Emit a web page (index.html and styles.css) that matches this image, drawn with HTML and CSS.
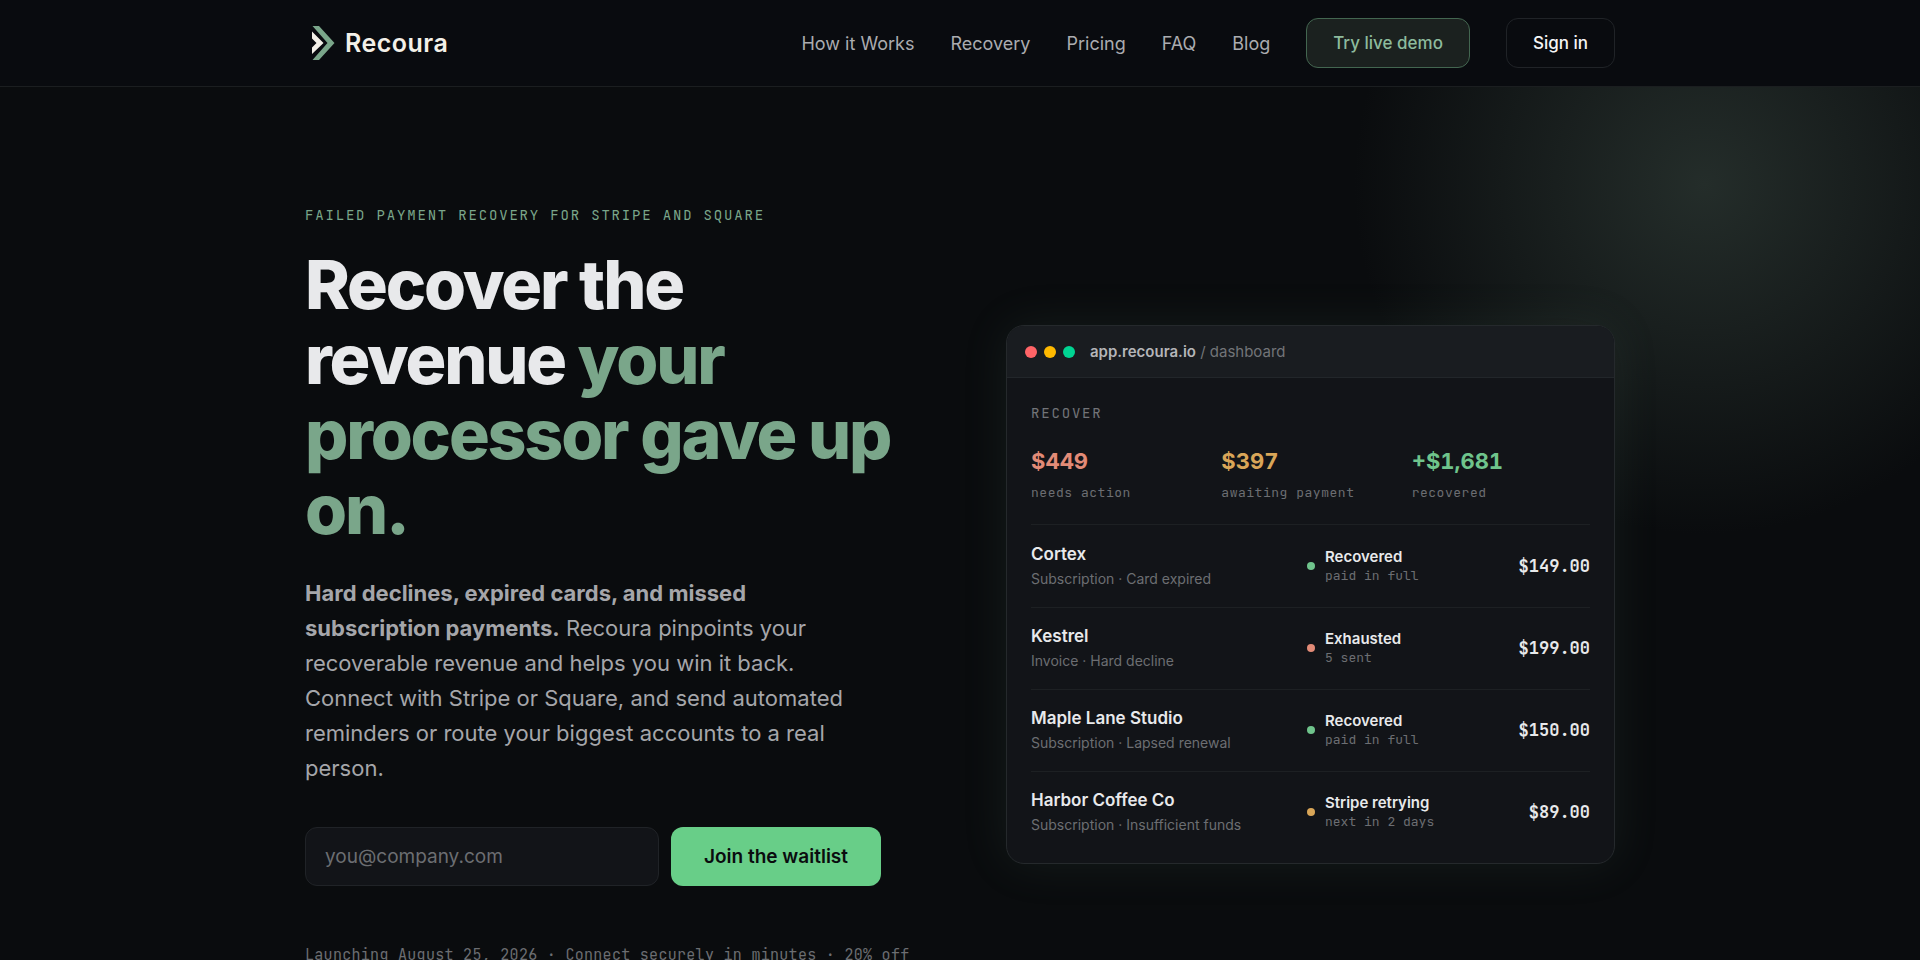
FILE: index.html
```html
<!DOCTYPE html>
<html lang="en">

<head>
  <meta charset="UTF-8">
  <meta name="viewport" content="width=device-width, initial-scale=1.0">
  <title>Recoura</title>
  <link rel="stylesheet" href="styles.css">
</head>

<body>

  <header class="site-header">
    <div class="container header-inner">
      <a class="logo" href="#">
        <svg class="logo-mark" viewBox="0 0 32 34" aria-hidden="true">
          <path fill="#7aa68a" d="M7.500 0h6.500l15.500 17L14 34H7.500l15-17z" />
          <path fill="#f3f0e8" d="M7 5.500L18.500 17 7 28v-6.500l4.500-4.500L7 12.500z" />
        </svg>
        Recoura
      </a>
      <nav class="nav">
        <a class="nav-link" href="#how">How it Works</a>
        <a class="nav-link" href="#recovery">Recovery</a>
        <a class="nav-link" href="#pricing">Pricing</a>
        <a class="nav-link" href="#faq">FAQ</a>
        <a class="nav-link" href="#blog">Blog</a>
        <a class="nav-btn nav-btn-demo" href="#demo">Try live demo</a>
        <a class="nav-btn" href="#signin">Sign in</a>
      </nav>
    </div>
  </header>

  <main class="hero">
    <div class="container hero-grid">
      <section class="hero-copy">
        <p class="eyebrow">Failed payment recovery for Stripe and Square</p>
        <h1 class="title">Recover the revenue <span class="accent">your processor gave up on.</span></h1>
        <p class="lead"><strong>Hard declines, expired cards, and missed subscription payments.</strong> Recoura
          pinpoints your recoverable revenue and helps you win it back. Connect with Stripe or Square, and send
          automated reminders or route your biggest accounts to a real person.</p>
        <form class="waitlist">
          <input class="email" type="email" name="email" placeholder="you@company.com" aria-label="Email">
          <button class="join" type="submit">Join the waitlist</button>
        </form>
        <p class="note">Launching August 25, 2026 · Connect securely in minutes · 20% off</p>
      </section>

      <section class="card">
        <div class="card-bar">
          <span class="light red"></span>
          <span class="light yellow"></span>
          <span class="light green"></span>
          <span class="url"><b>app.recoura.io</b> / dashboard</span>
        </div>
        <div class="card-body">
          <h2 class="card-label">Recover</h2>
          <div class="stats">
            <div>
              <div class="stat-value coral">$449</div>
              <div class="stat-label">needs action</div>
            </div>
            <div>
              <div class="stat-value amber">$397</div>
              <div class="stat-label">awaiting payment</div>
            </div>
            <div>
              <div class="stat-value mint">+$1,681</div>
              <div class="stat-label">recovered</div>
            </div>
          </div>
          <table class="accounts">
            <tr>
              <td class="account">
                <div class="name">Cortex</div>
                <div class="reason">Subscription · Card expired</div>
              </td>
              <td>
                <div class="status mint">
                  <div class="status-name">Recovered</div>
                  <div class="status-note">paid in full</div>
                </div>
              </td>
              <td class="amount">$149.00</td>
            </tr>
            <tr>
              <td class="account">
                <div class="name">Kestrel</div>
                <div class="reason">Invoice · Hard decline</div>
              </td>
              <td>
                <div class="status coral">
                  <div class="status-name">Exhausted</div>
                  <div class="status-note">5 sent</div>
                </div>
              </td>
              <td class="amount">$199.00</td>
            </tr>
            <tr>
              <td class="account">
                <div class="name">Maple Lane Studio</div>
                <div class="reason">Subscription · Lapsed renewal</div>
              </td>
              <td>
                <div class="status mint">
                  <div class="status-name">Recovered</div>
                  <div class="status-note">paid in full</div>
                </div>
              </td>
              <td class="amount">$150.00</td>
            </tr>
            <tr>
              <td class="account">
                <div class="name">Harbor Coffee Co</div>
                <div class="reason">Subscription · Insufficient funds</div>
              </td>
              <td>
                <div class="status amber">
                  <div class="status-name">Stripe retrying</div>
                  <div class="status-note">next in 2 days</div>
                </div>
              </td>
              <td class="amount">$89.00</td>
            </tr>
          </table>
        </div>
      </section>
    </div>
  </main>

</body>

</html>
```

FILE: styles.css
```css
:root {
  --bg: #0a0c0e;
  --panel: #121418;
  --line: #202327;
  --text: #e8e9eb;
  --muted: #a5a6aa;
  --dim: #6c6e72;
  --sage: #7aa68a;
  --mono: "JetBrains Mono", "DejaVu Sans Mono", monospace;
}

* {
  box-sizing: border-box;
}

body {
  margin: 0;
  background: var(--bg);
  color: var(--text);
  font-family: Inter, "Liberation Sans", sans-serif;
  overflow-x: hidden;
}

h1,
h2,
p {
  margin: 0;
}

a {
  color: inherit;
  text-decoration: none;
}

.container {
  max-width: 1366px;
  margin: 0 auto;
  padding: 0 28px;
}

/* header */
.site-header {
  background: #090b0f;
  border-bottom: 1px solid #1b1e20;
}

.header-inner {
  display: flex;
  align-items: center;
  justify-content: space-between;
  height: 86px;
}

.logo {
  display: flex;
  align-items: center;
  gap: 8px;
  color: #f3f0e8;
  font-size: 25px;
  font-weight: 600;
  letter-spacing: 0.02em;
}

.logo-mark {
  width: 32px;
  height: 34px;
}

.nav {
  display: flex;
  align-items: center;
  gap: 36px;
  font-size: 18px;
}

.nav-link {
  color: #abacb0;
}

.nav-btn {
  padding: 0 26px;
  border: 1px solid var(--line);
  border-radius: 12px;
  font-size: 17px;
  font-weight: 500;
  line-height: 48px;
  color: #f5f5f6;
}

.nav-btn-demo {
  color: #8dbb9d;
  background: #1b211f;
  border-color: #436650;
}

/* hero */
.hero {
  padding: 118px 0 32px;
  background: radial-gradient(circle 350px at calc(100% - 216px) 97px, #242d2a, rgba(36, 45, 42, 0)) no-repeat;
}

.hero-grid {
  display: grid;
  grid-template-columns: 1fr 1fr;
  gap: 92px;
}

.hero-copy {
  padding-bottom: 18px;
}

.eyebrow {
  color: var(--sage);
  font: 400 14px/20px var(--mono);
  letter-spacing: 0.13em;
  text-transform: uppercase;
}

.title {
  margin-top: 22px;
  font-size: 68px;
  line-height: 75px;
  font-weight: 800;
  letter-spacing: -0.032em;
}

.accent {
  color: var(--sage);
}

.lead {
  max-width: 560px;
  margin-top: 29px;
  color: var(--muted);
  font-size: 22px;
  line-height: 35px;
}

.lead strong {
  font-weight: 700;
}

.waitlist {
  display: flex;
  gap: 12px;
  max-width: 576px;
  margin-top: 41px;
}

.email {
  flex: 1;
  min-width: 0;
  height: 59px;
  padding: 0 19px;
  border: 1px solid var(--line);
  border-radius: 12px;
  background: var(--panel);
  color: var(--text);
  font: 400 19px Inter, "Liberation Sans", sans-serif;
}

.email::placeholder {
  color: var(--dim);
}

.join {
  padding: 0 33px;
  border: 0;
  border-radius: 12px;
  background: #68ce88;
  color: #0a0c0e;
  font: 600 19px Inter, "Liberation Sans", sans-serif;
}

.note {
  margin-top: 58px;
  color: var(--dim);
  font: 400 15px/22px var(--mono);
  letter-spacing: 0.02em;
}

/* dashboard card */
.card {
  align-self: center;
  border: 1px solid #25292c;
  border-radius: 18px;
  background: var(--panel);
  box-shadow: 0 0 48px rgba(122, 166, 138, 0.1);
  overflow: hidden;
}

.card-bar {
  display: flex;
  align-items: center;
  gap: 7px;
  height: 52px;
  padding: 0 18px;
  background: #191c20;
  border-bottom: 1px solid #22262a;
}

.light {
  width: 12px;
  height: 12px;
  border-radius: 50%;
}

.red {
  background: #ff6467;
}

.yellow {
  background: #ffb900;
}

.green {
  background: #00d492;
}

.url {
  margin-left: 8px;
  color: #727478;
  font-size: 15px;
}

.url b {
  color: #b4b5b8;
  font-weight: 600;
}

.card-body {
  padding: 24px 24px 10px;
}

.card-label {
  color: #727478;
  font: 400 14px/22px var(--mono);
  letter-spacing: 0.13em;
  text-transform: uppercase;
}

.stats {
  display: grid;
  grid-template-columns: repeat(3, 1fr);
  gap: 12px;
  padding: 22px 0;
  border-bottom: 1px solid #1d2023;
}

.stat-value {
  font-size: 22px;
  line-height: 30px;
  font-weight: 700;
  font-variant-numeric: tabular-nums;
}

.stat-label {
  margin-top: 8px;
  color: var(--dim);
  font: 400 13px/18px var(--mono);
  letter-spacing: 0.04em;
}

.coral {
  color: #e28b77;
}

.amber {
  color: #d9a658;
}

.mint {
  color: #6fc48c;
}

.accounts {
  width: 100%;
  border-collapse: collapse;
}

.accounts td {
  height: 82px;
  padding: 0;
  border-bottom: 1px solid #1d2023;
}

.accounts tr:last-child td {
  border-bottom: 0;
}

.account {
  width: 276px;
}

.name {
  font-size: 17px;
  line-height: 26px;
  font-weight: 600;
}

.reason {
  color: var(--dim);
  font-size: 14px;
  line-height: 24px;
}

.status {
  display: grid;
  grid-template-columns: 8px 1fr;
  column-gap: 10px;
  align-items: center;
}

.status::before {
  content: "";
  grid-row: 1 / 3;
  width: 8px;
  height: 8px;
  border-radius: 50%;
  background: currentColor;
}

.status-name {
  color: var(--text);
  font-size: 15px;
  line-height: 20px;
  font-weight: 600;
}

.status-note {
  color: var(--dim);
  font: 400 13px/18px var(--mono);
}

.accounts .amount {
  font: 600 17px var(--mono);
  text-align: right;
}
```
